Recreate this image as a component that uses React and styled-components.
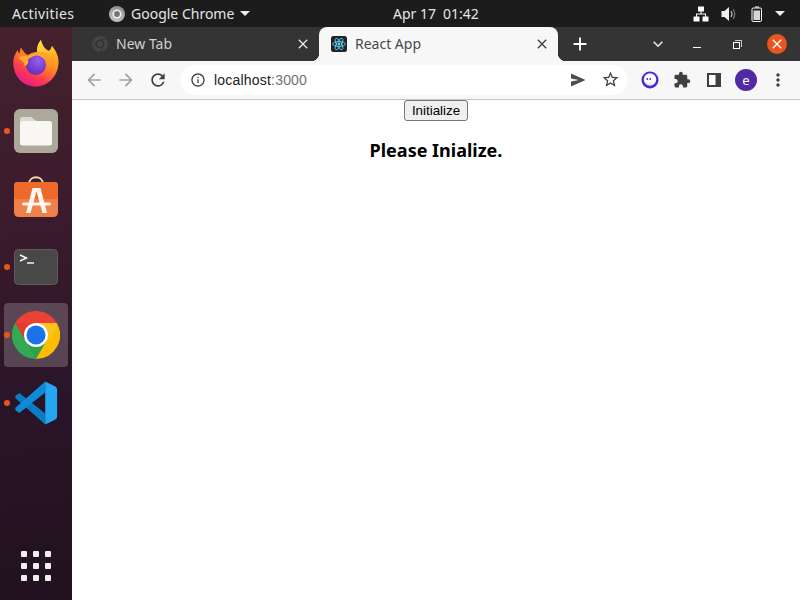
import React from 'react';
import styled, { createGlobalStyle } from 'styled-components';
import {
  MdArrowBack,
  MdArrowForward,
  MdRefresh,
  MdInfoOutline,
  MdStarBorder,
  MdMoreVert,
  MdExtension,
  MdClose,
  MdAdd,
  MdKeyboardArrowDown,
} from 'react-icons/md';

const GlobalStyle = createGlobalStyle`
  html, body { margin: 0; padding: 0; background: #fff; }
  * { box-sizing: border-box; }
`;

const SHELL_FONT = '"Noto Sans", "Open Sans", sans-serif';

/* ---------- icons ---------- */

const ChromeLogo = ({ size = 48 }) => (
  <svg width={size} height={size} viewBox="0 0 48 48">
    <path d="M24 24 L3.2 12 A24 24 0 0 1 44.8 12 Z" fill="#ea4335" />
    <path d="M24 24 L44.8 12 A24 24 0 0 1 24 48 Z" fill="#fbbc04" />
    <path d="M24 24 L24 48 A24 24 0 0 1 3.2 12 Z" fill="#34a853" />
    <path d="M24 12 L44.8 12 A24 24 0 0 1 34.4 30 Z" fill="#fcc31a" />
    <path d="M24 12 L3.2 12 L13.6 30 Z" fill="#e33b2e" />
    <path d="M13.6 30 L24 48 L34.4 30 Z" fill="#2f9e4d" />
    <circle cx="24" cy="24" r="12" fill="#fff" />
    <circle cx="24" cy="24" r="9.5" fill="#1a73e8" />
  </svg>
);

const SmallChrome = () => (
  <svg width="16" height="16" viewBox="0 0 16 16">
    <circle cx="8" cy="8" r="8" fill="#434547" />
    <circle cx="8" cy="8" r="4.4" fill="#343434" />
    <circle cx="8" cy="8" r="2.8" fill="#434547" />
    <path d="M8 3.6 H15 M4.2 10.2 L1 4.5 M11.8 10.2 L8 16" stroke="#343434" strokeWidth="1" />
  </svg>
);

const AppMenuLogo = () => (
  <svg width="16" height="16" viewBox="0 0 16 16">
    <defs>
      <linearGradient id="menuRim" x1="0.7" y1="0" x2="0.3" y2="1">
        <stop offset="0" stopColor="#8a8a8a" />
        <stop offset="1" stopColor="#c4c4c4" />
      </linearGradient>
    </defs>
    <circle cx="8" cy="8" r="8" fill="url(#menuRim)" />
    <circle cx="8" cy="8" r="4.6" fill="#efefef" />
    <circle cx="8" cy="8" r="2.9" fill="#747474" />
  </svg>
);

const ReactFavicon = () => (
  <svg width="16" height="16" viewBox="0 0 16 16">
    <rect width="16" height="16" rx="2.5" fill="#20232a" />
    <g fill="none" stroke="#61dafb" strokeWidth="0.8">
      <ellipse cx="8" cy="8" rx="6.4" ry="2.5" />
      <ellipse cx="8" cy="8" rx="6.4" ry="2.5" transform="rotate(60 8 8)" />
      <ellipse cx="8" cy="8" rx="6.4" ry="2.5" transform="rotate(120 8 8)" />
    </g>
    <circle cx="8" cy="8" r="1.4" fill="#61dafb" />
  </svg>
);

const Firefox = () => (
  <svg width="46" height="48" viewBox="0 0 46 48">
    <defs>
      <linearGradient id="ffBody" x1="0.8" y1="0.1" x2="0.3" y2="1">
        <stop offset="0" stopColor="#ffc92e" />
        <stop offset="0.4" stopColor="#ff8a22" />
        <stop offset="0.72" stopColor="#ff3b4e" />
        <stop offset="1" stopColor="#e01b8e" />
      </linearGradient>
      <linearGradient id="ffFlame" x1="0.3" y1="0" x2="0.7" y2="1">
        <stop offset="0" stopColor="#ffe03a" />
        <stop offset="1" stopColor="#ff9a24" />
      </linearGradient>
      <radialGradient id="ffGlobe" cx="0.6" cy="0.3" r="0.8">
        <stop offset="0" stopColor="#9a5cf0" />
        <stop offset="1" stopColor="#5a2ab0" />
      </radialGradient>
    </defs>
    <path
      d="M28 1 C29 7 33 11 36 12 C37 11 38.5 9.5 39 7 C43 12 46 18 45.5 24 C45 37 35 47.5 22.5 47.5 C10 47.5 0.3 37 0.3 24 C0.3 18 3 13 5 11 C5 13 5.5 14 6.5 15 C7 13 8 11 8 8.7 C10 12 12 15 15 16 C18 14 21 13 24 13 C24 8 25 4 28 1 Z"
      fill="url(#ffBody)"
    />
    <path
      d="M28 1 C29 7 33 11 36 12 C37 11 38.5 9.5 39 7 C43 12 46 18 45 26 C43 20 39 15 33 14 C29 13 26 13 24 13 C24 8 25 4 28 1 Z"
      fill="url(#ffFlame)"
    />
    <circle cx="23" cy="26" r="10" fill="url(#ffGlobe)" />
    <path
      d="M5 19 C9 16 12 16 15 17.5 C18 14.5 24 13.5 29 16 C31 17.5 32.5 19.5 33 22 C31 18.5 27 16.5 23 16.5 C20 16.5 18 19 15 20 C16 23.5 14.5 26.5 11.5 27 C12 24 9 21 5 19 Z"
      fill="#ffa92e"
    />
    <path d="M8 8.7 C10 12 12 15 15 17.5 C12 16 9 16 6.5 17 C6 14 7 11 8 8.7 Z" fill="#ff7a24" />
  </svg>
);

const FilesIcon = () => (
  <svg width="44" height="44" viewBox="0 0 44 44">
    <rect width="44" height="44" rx="6" fill="#aca89a" />
    <path d="M6 10 Q6 8 8 8 H17 L23 12.5 V20 H6 Z" fill="#dcd9d0" />
    <rect x="6" y="12" width="32" height="24.5" rx="2.5" fill="#f8f7f4" />
  </svg>
);

const AppStoreIcon = () => (
  <svg width="44" height="46" viewBox="0 0 44 46">
    <path d="M15 8 C15 -1 29 -1 29 8" fill="none" stroke="#f3d7b4" strokeWidth="1.8" />
    <path d="M3 6 H41 Q44 6 44 9 V23 H0 V9 Q0 6 3 6 Z" fill="#ee6a2c" />
    <path d="M0 23 H44 V36 Q44 41 39 41 H5 Q0 41 0 36 Z" fill="#f07f48" />
    <path d="M18.5 12 H26.5 L33 37 H28.5 L22.5 15.5 L16.5 37 H12 Z" fill="#fdf5ee" />
    <rect x="8" y="26.5" width="29" height="3" rx="1.5" fill="#fdf5ee" />
  </svg>
);

const TerminalIcon = () => (
  <svg width="44" height="36" viewBox="0 0 44 36">
    <rect x="0.5" y="0.5" width="43" height="35" rx="4" fill="#484848" stroke="#5c5c5c" />
    <path d="M6 6 L12.5 9 L6 12" fill="none" stroke="#fff" strokeWidth="1.4" />
    <path d="M13 14 H20" stroke="#fff" strokeWidth="1.4" />
  </svg>
);

const VSCodeIcon = () => (
  <svg width="44" height="44" viewBox="0 0 100 100">
    <path d="M4 33 L12 27 L71 74 V99 L4 40 Q1 36 4 33 Z" fill="#0a7cc2" />
    <path d="M4 67 L12 73 L71 26 V1 L4 60 Q1 64 4 67 Z" fill="#0e8ad6" />
    <path d="M71 1 L93 12 Q98 14 98 19 V81 Q98 86 93 88 L71 99 Z" fill="#24a6f2" />
  </svg>
);

const NetworkIcon = () => (
  <svg width="16" height="16" viewBox="0 0 16 16" fill="#fff">
    <rect x="5" y="0.5" width="6" height="5" rx="0.5" />
    <rect x="0.5" y="10.5" width="6" height="5" rx="0.5" />
    <rect x="9.5" y="10.5" width="6" height="5" rx="0.5" />
    <path d="M7.5 5 H8.5 V7.5 H13 V11 H12 V8.5 H4 V11 H3 V7.5 H7.5 Z" />
  </svg>
);

const VolumeIcon = () => (
  <svg width="16" height="16" viewBox="0 0 16 16">
    <path d="M0.5 5 H3.5 L8 1 V15 L3.5 11 H0.5 Z" fill="#eee" />
    <path d="M10 5 Q12 8 10 11" fill="none" stroke="#bbb" strokeWidth="1.2" />
    <path d="M12 3 Q15.5 8 12 13" fill="none" stroke="#777" strokeWidth="1.2" />
  </svg>
);

const BatteryIcon = () => (
  <svg width="12" height="16" viewBox="0 0 12 16">
    <path d="M4 0.5 H8 V1.5 H4 Z" fill="#fff" />
    <rect x="1" y="2" width="9.5" height="13.5" rx="1.2" fill="none" stroke="#fff" />
    <rect x="2.5" y="4.5" width="6.5" height="9.5" fill="#d5d5d5" />
  </svg>
);

const SendIcon = () => (
  <svg width="16" height="14" viewBox="0 0 16 14" fill="#4a4c4f">
    <path d="M1 0.5 L15.5 7 L1 13.5 L1 8.5 L9 7 L1 5.5 Z" />
  </svg>
);

const SidePanelIcon = () => (
  <svg width="14" height="14" viewBox="0 0 14 14">
    <rect width="14" height="14" fill="#3c4043" />
    <rect x="2" y="2" width="6.5" height="10" fill="#fff" />
  </svg>
);

const GhostExtension = () => (
  <svg width="18" height="18" viewBox="0 0 18 18">
    <circle cx="9" cy="9" r="8.5" fill="#4a28cf" />
    <circle cx="9" cy="8.5" r="6.2" fill="#efeaff" />
    <path d="M3.2 9 C3.2 5.5 6 3.6 9 3.6 C12.5 3.6 14.8 6 14.8 9 C14.8 11 13 11.8 11 11.6 C8 12.4 4 12.2 3.2 9 Z" fill="#fff" />
    <circle cx="6.3" cy="8" r="0.9" fill="#4a28cf" />
    <circle cx="9.3" cy="8" r="0.9" fill="#4a28cf" />
  </svg>
);

/* ---------- layout ---------- */

const Screen = styled.div`
  width: 800px;
  height: 600px;
  display: flex;
  flex-direction: column;
  overflow: hidden;
  font-family: ${SHELL_FONT};
`;

const TopBar = styled.header`
  height: 27px;
  flex: none;
  display: flex;
  align-items: center;
  background: #1c1c1c;
  color: #e6e6e6;
  font-size: 14px;
  padding-left: 12px;
`;

const Activities = styled.span`
  width: 97px;
  letter-spacing: 0.4px;
`;

const AppMenu = styled.div`
  width: 284px;
  display: flex;
  align-items: center;
  gap: 6px;
`;

const Caret = styled.span`
  width: 0;
  height: 0;
  border-left: 5px solid transparent;
  border-right: 5px solid transparent;
  border-top: 5px solid #eee;
`;

const Clock = styled.div`
  width: 300px;
  display: flex;
  gap: 7px;
`;

const Tray = styled.div`
  display: flex;
  align-items: center;
  gap: 12px;
`;

const TrayBattery = styled.span`
  display: flex;
  margin-left: 2px;
`;

const Desktop = styled.div`
  flex: 1;
  display: flex;
  min-height: 0;
`;

const Dock = styled.nav`
  width: 72px;
  flex: none;
  display: flex;
  flex-direction: column;
  align-items: center;
  gap: 4px;
  padding: 4px 0 19px;
  background: linear-gradient(172deg, #45212c 0%, #3a1b2d 35%, #2a1528 65%, #21111e 100%);
`;

const DockSlot = styled.div`
  position: relative;
  width: 64px;
  height: 64px;
  display: flex;
  align-items: center;
  justify-content: center;
  border-radius: 4px;
  background: ${(p) => (p.$active ? 'rgba(255,255,255,0.2)' : 'transparent')};
  ${(p) =>
    p.$running &&
    `&::before {
      content: '';
      position: absolute;
      left: 0;
      top: 29px;
      width: 6px;
      height: 6px;
      border-radius: 50%;
      background: #e95420;
    }`}
`;

const AppGrid = styled.div`
  margin-top: auto;
  display: grid;
  grid-template-columns: repeat(3, 6px);
  gap: 6px;
  height: 30px;
`;

const GridDot = styled.span`
  width: 6px;
  height: 6px;
  border-radius: 1px;
  background: #eeeeec;
`;

const Browser = styled.div`
  flex: 1;
  min-width: 0;
  display: flex;
  flex-direction: column;
`;

const TabStrip = styled.div`
  height: 34px;
  flex: none;
  display: flex;
  align-items: stretch;
  background: #343434;
`;

const Tab = styled.div`
  position: relative;
  width: ${(p) => (p.$active ? 239 : 247)}px;
  display: flex;
  align-items: center;
  gap: 8px;
  padding: 0 8px 0 ${(p) => (p.$active ? 12 : 20)}px;
  font-size: 14px;
  color: ${(p) => (p.$active ? '#45494e' : '#d0d0d0')};
  background: ${(p) => (p.$active ? '#f7f7f7' : 'transparent')};
  border-radius: ${(p) => (p.$active ? '8px 8px 0 0' : '0')};
  ${(p) =>
    p.$active &&
    `&::before, &::after {
      content: '';
      position: absolute;
      bottom: 0;
      width: 8px;
      height: 8px;
    }
    &::before {
      left: -8px;
      background: radial-gradient(circle at 0 0, transparent 8px, #f7f7f7 8.5px);
    }
    &::after {
      right: -8px;
      background: radial-gradient(circle at 100% 0, transparent 8px, #f7f7f7 8.5px);
    }`}
`;

const TabTitle = styled.span`
  flex: 1;
  padding-bottom: 2px;
`;

const CloseTab = styled(MdClose)`
  color: ${(p) => (p.$active ? '#3c4043' : '#e6e6e6')};
  font-size: 16px;
`;

const StripActions = styled.div`
  flex: 1;
  display: flex;
  align-items: center;
  color: #fff;
`;

const NewTabButton = styled(MdAdd)`
  font-size: 22px;
  margin-left: 11px;
`;

const TabSearch = styled(MdKeyboardArrowDown)`
  font-size: 20px;
  margin-left: 57px;
  color: #e0e0e0;
`;

const Minimize = styled.span`
  width: 8px;
  height: 1px;
  background: #fff;
  margin: 7px 0 0 25px;
`;

const Restore = styled.span`
  position: relative;
  width: 7px;
  height: 7px;
  border: 1px solid #fff;
  margin: 2px 0 0 32px;
  &::after {
    content: '';
    position: absolute;
    right: -3px;
    top: -3px;
    width: 6px;
    height: 6px;
    border-top: 1px solid #ccc;
    border-right: 1px solid #ccc;
  }
`;

const WindowClose = styled.span`
  width: 20px;
  height: 20px;
  margin-left: 27px;
  border-radius: 50%;
  background: #e95420;
  display: flex;
  align-items: center;
  justify-content: center;
  font-size: 16px;
`;

const Toolbar = styled.div`
  height: 39px;
  flex: none;
  display: flex;
  align-items: center;
  padding: 0 0 1px 6px;
  background: #f7f7f7;
  border-bottom: 1px solid #c6c6c6;
`;

const ToolIcon = styled.span`
  width: 32px;
  flex: none;
  display: flex;
  align-items: center;
  justify-content: center;
  font-size: ${(p) => p.$size || 20}px;
  color: ${(p) => p.$color || '#3c4043'};
`;

const Omnibox = styled.div`
  width: 448px;
  height: 30px;
  flex: none;
  margin: 0 6px 0 6px;
  padding: 0 2px 0 10px;
  display: flex;
  align-items: center;
  border-radius: 15px;
  background: #fff;
  font-family: 'Liberation Sans', Arial, sans-serif;
  font-size: 14px;
  letter-spacing: 0.2px;
  color: #202124;
`;

const InfoIcon = styled(MdInfoOutline)`
  font-size: 16px;
  color: #3c4043;
  margin-right: 8px;
`;

const Url = styled.div`
  flex: 1;
`;

const Port = styled.span`
  color: #6f7276;
`;

const Avatar = styled.span`
  width: 22px;
  height: 22px;
  border-radius: 50%;
  background: #4f2aa3;
  color: #fff;
  font-size: 13px;
  display: flex;
  align-items: center;
  justify-content: center;
`;

const Page = styled.main`
  flex: 1;
  background: #fff;
  text-align: center;
  font-family: 'Liberation Sans', Arial, sans-serif;
  color: #000;
`;

const InitButton = styled.button`
  height: 21px;
  padding: 1px 7px;
  font-family: 'Liberation Sans', Arial, sans-serif;
  font-size: 13.33px;
  color: #000;
  background: #efefef;
  border: 1px solid #767676;
  border-radius: 3px;
`;

const Message = styled.h3`
  margin: 17px 0 0;
  font-family: ${SHELL_FONT};
  font-size: 18px;
  font-weight: 700;
`;

const App = () => (
  <Screen>
    <GlobalStyle />
    <TopBar>
      <Activities>Activities</Activities>
      <AppMenu>
        <AppMenuLogo />
        <span>Google Chrome</span>
        <Caret />
      </AppMenu>
      <Clock>
        <span>Apr 17</span>
        <span>01:42</span>
      </Clock>
      <Tray>
        <NetworkIcon />
        <VolumeIcon />
        <TrayBattery>
          <BatteryIcon />
        </TrayBattery>
        <Caret />
      </Tray>
    </TopBar>
    <Desktop>
      <Dock>
        <DockSlot>
          <Firefox />
        </DockSlot>
        <DockSlot $running>
          <FilesIcon />
        </DockSlot>
        <DockSlot>
          <AppStoreIcon />
        </DockSlot>
        <DockSlot $running>
          <TerminalIcon />
        </DockSlot>
        <DockSlot $running $active>
          <ChromeLogo />
        </DockSlot>
        <DockSlot $running>
          <VSCodeIcon />
        </DockSlot>
        <AppGrid>
          {Array.from({ length: 9 }, (_, i) => (
            <GridDot key={i} />
          ))}
        </AppGrid>
      </Dock>
      <Browser>
        <TabStrip>
          <Tab>
            <SmallChrome />
            <TabTitle>New Tab</TabTitle>
            <CloseTab />
          </Tab>
          <Tab $active>
            <ReactFavicon />
            <TabTitle>React App</TabTitle>
            <CloseTab $active />
          </Tab>
          <StripActions>
            <NewTabButton />
            <TabSearch />
            <Minimize />
            <Restore />
            <WindowClose>
              <MdClose />
            </WindowClose>
          </StripActions>
        </TabStrip>
        <Toolbar>
          <ToolIcon $color="#a0a2a5">
            <MdArrowBack />
          </ToolIcon>
          <ToolIcon $color="#a0a2a5">
            <MdArrowForward />
          </ToolIcon>
          <ToolIcon>
            <MdRefresh />
          </ToolIcon>
          <Omnibox>
            <InfoIcon />
            <Url>
              localhost<Port>:3000</Port>
            </Url>
            <ToolIcon>
              <SendIcon />
            </ToolIcon>
            <ToolIcon $size={19}>
              <MdStarBorder />
            </ToolIcon>
          </Omnibox>
          <ToolIcon>
            <GhostExtension />
          </ToolIcon>
          <ToolIcon $size={18}>
            <MdExtension />
          </ToolIcon>
          <ToolIcon>
            <SidePanelIcon />
          </ToolIcon>
          <ToolIcon>
            <Avatar>e</Avatar>
          </ToolIcon>
          <ToolIcon>
            <MdMoreVert />
          </ToolIcon>
        </Toolbar>
        <Page>
          <InitButton>Initialize</InitButton>
          <Message>Please Inialize.</Message>
        </Page>
      </Browser>
    </Desktop>
  </Screen>
);

export default App;
